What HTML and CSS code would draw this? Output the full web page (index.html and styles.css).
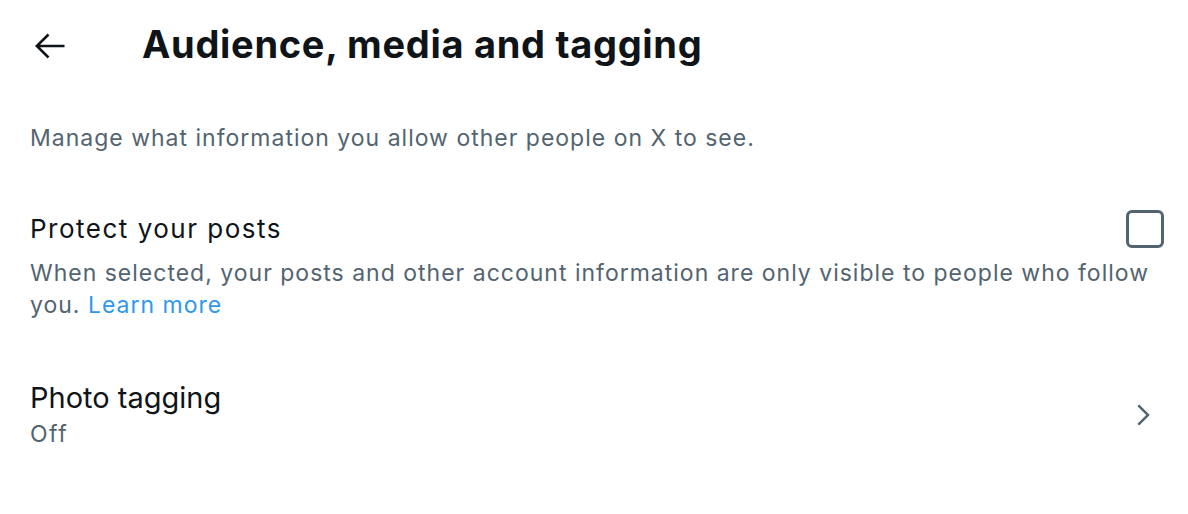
FILE: index.html
```html
<!DOCTYPE html>
<html lang="en">
<head>
    <meta charset="UTF-8">
    <title>Audience, media and tagging</title>
    <link rel="stylesheet" href="styles.css">
</head>
<body>
    <div class="header">
        <button class="back" aria-label="Back">
            <svg viewBox="0 0 30 26" width="30" height="26"><path d="M1.5 13H29.5M13.5 1.5L1.8 13L13.5 24.5"></path></svg>
        </button>
        <h1>Audience, media and tagging</h1>
    </div>

    <p class="intro">Manage what information you allow other people on X to see.</p>

    <div class="setting">
        <div class="setting-row">
            <span class="setting-title">Protect your posts</span>
            <span class="checkbox"></span>
        </div>
        <p class="setting-desc">When selected, your posts and other account information are only visible to people who follow you. <a href="#">Learn more</a></p>
    </div>

    <a class="link-row" href="#">
        <div>
            <div class="link-title">Photo tagging</div>
            <div class="setting-value">Off</div>
        </div>
        <svg viewBox="0 0 24 24" width="30" height="30" class="chevron"><path d="M14.586 12L7.543 4.96l1.414-1.42L17.414 12l-8.457 8.46-1.414-1.42L14.586 12z"></path></svg>
    </a>
</body>
</html>
```

FILE: styles.css
```css
body {
    margin: 0;
    font-family: Inter, "Noto Sans", sans-serif;
    color: #0f1419;
    background-color: #fff;
}

.header {
    display: flex;
    align-items: center;
    height: 88px;
    padding: 0 30px 0 35px;
}

.back {
    width: 30px;
    height: 26px;
    margin: 3px 77px 0 0;
    padding: 0;
    border: none;
    background: none;
    display: flex;
}

.back path {
    fill: none;
    stroke: #0f1419;
    stroke-width: 2.6;
}

h1 {
    margin: 0;
    font-size: 38px;
    line-height: 46px;
    font-weight: 700;
    letter-spacing: 0.7px;
}

.intro {
    margin: 34px 30px 0;
    font-size: 23px;
    line-height: 32px;
    letter-spacing: 1px;
    color: #536471;
}

.setting {
    padding: 0 24px 0 30px;
    margin-top: 56px;
}

.setting-row {
    display: flex;
    align-items: center;
    justify-content: space-between;
}

.setting-title {
    font-size: 26px;
    line-height: 36px;
    letter-spacing: 1.5px;
}

.checkbox {
    width: 32px;
    height: 32px;
    border: 3px solid #536471;
    border-radius: 6px;
}

.setting-desc {
    margin: 9px 0 0;
    font-size: 23px;
    line-height: 32px;
    letter-spacing: 1px;
    color: #536471;
}

.setting-desc a {
    color: #2f98ec;
    text-decoration: none;
}

.link-row {
    display: flex;
    align-items: center;
    justify-content: space-between;
    padding: 0 30px;
    margin-top: 59px;
    color: inherit;
    text-decoration: none;
}

.link-title {
    font-size: 29px;
    line-height: 36px;
}

.setting-value {
    margin-top: 2px;
    font-size: 23px;
    line-height: 32px;
    letter-spacing: 1.5px;
    color: #536471;
}

.chevron {
    fill: #536471;
}
```
